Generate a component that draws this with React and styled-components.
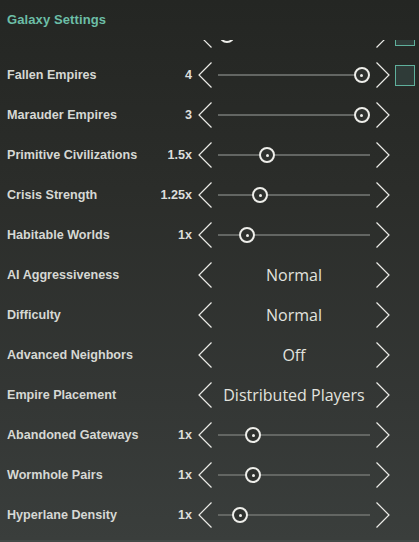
import React from "react";
import styled, { createGlobalStyle } from "styled-components";

const GlobalStyle = createGlobalStyle`
  html, body {
    margin: 0;
    padding: 0;
    background: #262825;
  }
  body {
    font-family: "Liberation Sans", Arial, sans-serif;
  }
`;

const Panel = styled.div`
  width: 419px;
  height: 542px;
  box-sizing: border-box;
  overflow: hidden;
  display: flex;
  flex-direction: column;
  border-bottom: 2px solid #434947;
  background: linear-gradient(180deg, #242623 0%, #2b2d2a 35%, #343735 75%, #3a3e3c 100%);
`;

const Title = styled.div`
  height: 40px;
  flex: none;
  display: flex;
  align-items: center;
  padding: 0 0 2px 7px;
  box-sizing: border-box;
  color: #6cbea7;
  font-size: 13px;
  font-weight: bold;
  letter-spacing: 0.1px;
`;

const Viewport = styled.div`
  flex: 1;
  overflow: hidden;
`;

const List = styled.div`
  margin-top: -25px;
  display: flex;
  flex-direction: column;
`;

const Row = styled.div`
  height: 40px;
  display: grid;
  grid-template-columns: 185px 14px 152px 14px 20px;
  column-gap: 6px;
  align-items: center;
  padding-left: 7px;
  & > :last-child {
    margin-left: -1px;
  }
`;

const LabelCell = styled.div`
  display: flex;
  justify-content: space-between;
  align-items: center;
  color: #d6d8d4;
  font-size: 12.6px;
  font-weight: bold;
  white-space: nowrap;
`;

const Value = styled.span`
  color: #dcdedb;
`;

const Chevron = styled.svg`
  display: block;
  width: 14px;
  height: 26px;
  overflow: visible;
`;

const Track = styled.div`
  position: relative;
  height: 16px;
  display: flex;
  align-items: center;
  &::before {
    content: "";
    display: block;
    width: 100%;
    height: 2px;
    background: #636663;
  }
`;

const Knob = styled.div`
  position: absolute;
  top: 0;
  width: 16px;
  height: 16px;
  margin-left: -8px;
  box-sizing: border-box;
  border: 2px solid #eeeeea;
  border-radius: 50%;
  background: #2f322f;
  display: flex;
  align-items: center;
  justify-content: center;
  &::after {
    content: "";
    width: 3px;
    height: 3px;
    border-radius: 50%;
    background: #eeeeea;
  }
`;

const Select = styled.div`
  text-align: center;
  color: #e2e3df;
  font-family: "Open Sans", "Noto Sans", sans-serif;
  font-size: 16px;
  white-space: nowrap;
  margin: 0 -6px;
`;

const Check = styled.div`
  width: 20px;
  height: 21px;
  box-sizing: border-box;
  border: 1.5px solid #5fb09c;
  background: #2f3b38;
`;

const Left = () => (
  <Chevron viewBox="0 0 14 26">
    <polyline points="13.5,0.5 1,13 13.5,25.5" fill="none" stroke="#ecece8" strokeWidth="1.2" />
  </Chevron>
);

const Right = () => (
  <Chevron viewBox="0 0 14 26">
    <polyline points="0.5,0.5 13,13 0.5,25.5" fill="none" stroke="#ecece8" strokeWidth="1.2" />
  </Chevron>
);

const rows = [
  { label: "", value: "", pos: 0.06, check: true },
  { label: "Fallen Empires", value: "4", pos: 0.947, check: true },
  { label: "Marauder Empires", value: "3", pos: 0.947 },
  { label: "Primitive Civilizations", value: "1.5x", pos: 0.325 },
  { label: "Crisis Strength", value: "1.25x", pos: 0.278 },
  { label: "Habitable Worlds", value: "1x", pos: 0.192 },
  { label: "AI Aggressiveness", option: "Normal" },
  { label: "Difficulty", option: "Normal" },
  { label: "Advanced Neighbors", option: "Off" },
  { label: "Empire Placement", option: "Distributed Players" },
  { label: "Abandoned Gateways", value: "1x", pos: 0.232 },
  { label: "Wormhole Pairs", value: "1x", pos: 0.232 },
  { label: "Hyperlane Density", value: "1x", pos: 0.146 },
];

const SettingRow = ({ label, value, pos, option, check }) => (
  <Row>
    <LabelCell>
      <span>{label}</span>
      {value && <Value>{value}</Value>}
    </LabelCell>
    <Left />
    {option ? (
      <Select>{option}</Select>
    ) : (
      <Track>
        <Knob style={{ left: `${pos * 100}%` }} />
      </Track>
    )}
    <Right />
    {check ? <Check /> : <span />}
  </Row>
);

export default function App() {
  return (
    <>
      <GlobalStyle />
      <Panel>
        <Title>Galaxy Settings</Title>
        <Viewport>
          <List>
            {rows.map((r, i) => (
              <SettingRow key={i} {...r} />
            ))}
          </List>
        </Viewport>
      </Panel>
    </>
  );
}
